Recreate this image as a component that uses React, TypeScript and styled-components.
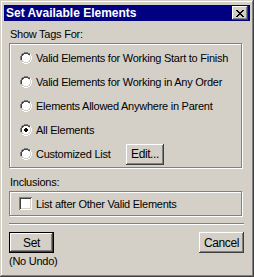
import React from "react";
import styled, { createGlobalStyle } from "styled-components";

const GlobalStyle = createGlobalStyle`
  html, body {
    margin: 0;
    padding: 0;
    background: #d4d0c8;
  }
  body {
    font-family: "Liberation Sans", Arial, sans-serif;
    font-size: 11px;
    letter-spacing: -0.25px;
    color: #000;
  }
`;

const Window = styled.div`
  width: 254px;
  height: 277px;
  box-sizing: border-box;
  background: #d4d0c8;
  padding: 5px 4px 4px;
  box-shadow: inset -1px -1px 0 #404040, inset 1px 1px 0 #d4d0c8,
    inset -2px -2px 0 #808080, inset 2px 2px 0 #ffffff;
  display: flex;
  flex-direction: column;
`;

const TitleBar = styled.div`
  height: 16px;
  flex: none;
  background: #000080;
  color: #fff;
  display: flex;
  align-items: center;
  justify-content: space-between;
  padding: 0 2px 0 2px;
`;

const Title = styled.span`
  font-weight: bold;
  font-size: 12px;
  letter-spacing: 0;
`;

const CloseButton = styled.div`
  width: 16px;
  height: 14px;
  box-sizing: border-box;
  background: #d4d0c8;
  box-shadow: inset -1px -1px 0 #404040, inset 1px 1px 0 #ffffff,
    inset -2px -2px 0 #808080;
  display: flex;
  align-items: center;
  justify-content: center;
`;

const Body = styled.div`
  padding: 0 6px 0 5px;
  display: flex;
  flex-direction: column;
`;

const Label = styled.div<{ $top: number }>`
  margin-top: ${(p) => p.$top}px;
  height: 13px;
  line-height: 13px;
  padding-left: 1px;
`;

const GroupBox = styled.div<{ $pad: string }>`
  margin: 2px 2px 0 0;
  border: 1px solid #808080;
  box-shadow: inset 1px 1px 0 #fff, 1px 1px 0 #fff;
  padding: ${(p) => p.$pad};
  display: flex;
  flex-direction: column;
`;

const OptionRow = styled.label<{ $h?: number }>`
  display: flex;
  align-items: center;
  height: ${(p) => p.$h ?? 24}px;
  gap: 4px;
  white-space: nowrap;
`;

const EditRow = styled.div`
  display: grid;
  grid-template-columns: 106px auto;
  align-items: center;
  height: 24px;
`;

const Radio = ({ checked }: { checked?: boolean }) => (
  <svg width="12" height="12" viewBox="0 0 12 12" shapeRendering="crispEdges">
    <path d="M4 0h4v1H4zM2 1h2v1H2zM8 1h2v1H8zM1 2h1v2H1zM0 4h1v4H0z" fill="#808080" />
    <path d="M4 1h4v1H4zM2 2h2v1H2zM8 2h2v1H8zM2 3h1v1H2zM1 4h1v4H1z" fill="#404040" />
    <path d="M3 3h6v6H3zM4 2h4v8H4zM2 4h8v4H2z" fill="#fff" />
    <path d="M10 4h1v4h-1zM9 8h1v1H9zM8 9h1v1H8zM2 8h1v1H2zM4 10h4v1H4zM3 9h1v1H3z" fill="#d4d0c8" />
    <path d="M11 4h1v4h-1zM10 8h1v2h-1zM8 10h2v1H8zM4 11h4v1H4zM2 10h2v1H2zM10 2h1v2h-1z" fill="#fff" />
    {checked && <path d="M5 4h2v1H5zM4 5h4v2H4zM5 7h2v1H5z" fill="#000" />}
  </svg>
);

const CheckBox = styled.span`
  width: 13px;
  height: 13px;
  box-sizing: border-box;
  background: #fff;
  flex: none;
  box-shadow: inset 1px 1px 0 #808080, inset -1px -1px 0 #fff,
    inset 2px 2px 0 #404040, inset -2px -2px 0 #d4d0c8;
`;

const Button = styled.div<{ $width: number; $default?: boolean }>`
  width: ${(p) => p.$width}px;
  height: 21px;
  box-sizing: border-box;
  display: flex;
  align-items: center;
  justify-content: center;
  background: #d4d0c8;
  border: ${(p) => (p.$default ? "1px solid #000" : "none")};
  box-shadow: inset -1px -1px 0 #404040, inset 1px 1px 0 #ffffff,
    inset -2px -2px 0 #808080;
  font-size: 12px;
  letter-spacing: -0.4px;
`;

const Separator = styled.div`
  margin-top: 7px;
  height: 0;
  border-top: 1px solid #808080;
  border-bottom: 1px solid #fff;
`;

const ButtonRow = styled.div`
  margin-top: 7px;
  display: flex;
  justify-content: space-between;
`;

const Note = styled.div`
  margin-top: 2px;
  line-height: 13px;
`;

const options = [
  "Valid Elements for Working Start to Finish",
  "Valid Elements for Working in Any Order",
  "Elements Allowed Anywhere in Parent",
  "All Elements",
];

export default function App() {
  return (
    <>
      <GlobalStyle />
      <Window>
        <TitleBar>
          <Title>Set Available Elements</Title>
          <CloseButton>
            <svg width="8" height="7" viewBox="0 0 8 7" shapeRendering="crispEdges">
              <path
                d="M0 0h2v1H0zM6 0h2v1H6zM1 1h2v1H1zM5 1h2v1H5zM2 2h4v1H2zM3 3h2v1H3zM2 4h4v1H2zM1 5h2v1H1zM5 5h2v1H5zM0 6h2v1H0zM6 6h2v1H6z"
                fill="#000"
              />
            </svg>
          </CloseButton>
        </TitleBar>
        <Body>
          <Label $top={7}>Show Tags For:</Label>
          <GroupBox $pad="2px 0 1px 10px">
            {options.map((o, i) => (
              <OptionRow key={o}>
                <Radio checked={i === 3} />
                <span>{o}</span>
              </OptionRow>
            ))}
            <EditRow>
              <OptionRow>
                <Radio />
                <span>Customized List</span>
              </OptionRow>
              <Button $width={38}>Edit...</Button>
            </EditRow>
          </GroupBox>
          <Label $top={8}>Inclusions:</Label>
          <GroupBox $pad="5px 0 5px 9px">
            <OptionRow $h={13}>
              <CheckBox />
              <span>List after Other Valid Elements</span>
            </OptionRow>
          </GroupBox>
          <Separator />
          <ButtonRow>
            <Button $width={45} $default>
              Set
            </Button>
            <Button $width={45}>Cancel</Button>
          </ButtonRow>
          <Note>(No Undo)</Note>
        </Body>
      </Window>
    </>
  );
}
